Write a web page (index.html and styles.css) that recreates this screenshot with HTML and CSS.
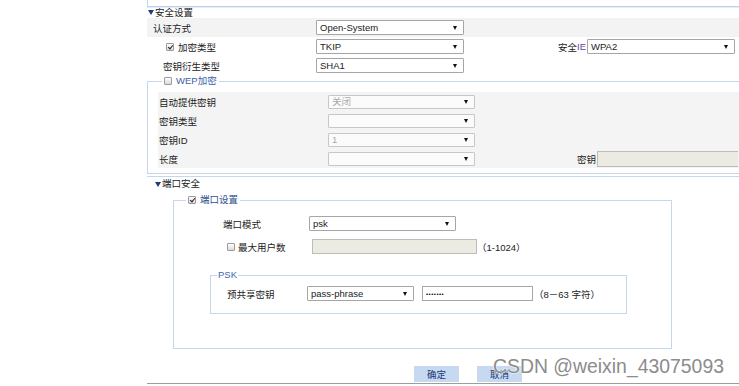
FILE: index.html
```html
<!DOCTYPE html>
<html lang="zh-CN">
<head>
    <meta charset="UTF-8">
    <title>无线安全设置</title>
    <link rel="stylesheet" href="styles.css">
</head>
<body>
    <div class="page">
        <div class="top-box"></div>

        <!-- 安全设置 -->
        <div class="section section-sec">
            <div class="sec-title"><span class="tri"></span>安全设置</div>
            <div class="row row-grey">
                <label class="lbl lbl-main">认证方式</label>
                <span class="sel w148"><select><option>Open-System</option></select></span>
            </div>
            <div class="row">
                <label class="lbl lbl-main lbl-cb"><input type="checkbox" class="cb" checked>加密类型</label>
                <span class="sel w148"><select><option>TKIP</option></select></span>
                <label class="lbl lbl-right">安全<span class="ie">IE</span></label>
                <span class="sel w148"><select><option>WPA2</option></select></span>
            </div>
            <div class="row">
                <label class="lbl lbl-main lbl-sub">密钥衍生类型</label>
                <span class="sel w148"><select><option>SHA1</option></select></span>
            </div>

            <fieldset class="wep">
                <legend><input type="checkbox" class="cb">WEP加密</legend>
                <div class="wep-body">
                    <div class="row">
                        <label class="lbl lbl-wep">自动提供密钥</label>
                        <span class="sel w147 off"><select disabled><option>关闭</option></select></span>
                    </div>
                    <div class="row">
                        <label class="lbl lbl-wep">密钥类型</label>
                        <span class="sel w147 off"><select disabled><option></option></select></span>
                    </div>
                    <div class="row">
                        <label class="lbl lbl-wep">密钥ID</label>
                        <span class="sel w147 off"><select disabled><option>1</option></select></span>
                    </div>
                    <div class="row">
                        <label class="lbl lbl-wep">长度</label>
                        <span class="sel w147 off"><select disabled><option></option></select></span>
                        <label class="lbl lbl-key">密钥</label>
                        <input type="text" class="txt txt-key" disabled>
                    </div>
                </div>
            </fieldset>
        </div>

        <!-- 端口安全 -->
        <div class="section section-port">
            <div class="sec-title sec-title-port"><span class="tri"></span>端口安全</div>
            <fieldset class="port">
                <legend><input type="checkbox" class="cb" checked>端口设置</legend>
                <div class="row port-row">
                    <label class="lbl lbl-mode">端口模式</label>
                    <span class="sel w147"><select><option>psk</option></select></span>
                </div>
                <div class="row port-row port-row-max">
                    <label class="lbl lbl-max"><input type="checkbox" class="cb">最大用户数</label>
                    <input type="text" class="txt txt-max" disabled>
                    <span class="note">（1-1024）</span>
                </div>

                <fieldset class="psk">
                    <legend>PSK</legend>
                    <div class="row psk-row">
                        <label class="lbl lbl-psk">预共享密钥</label>
                        <span class="sel w107"><select><option>pass-phrase</option></select></span>
                        <input type="password" class="txt txt-pass" value="1234567">
                        <span class="note note-psk">（8－63 字符）</span>
                    </div>
                </fieldset>
            </fieldset>
        </div>

        <div class="actions">
            <button type="button" class="btn">确定</button>
            <button type="button" class="btn">取消</button>
        </div>
        <div class="footer-line"></div>
    </div>

    <div class="watermark">CSDN @weixin_43075093</div>
</body>
</html>
```

FILE: styles.css
```css
body {
    margin: 0;
    font-family: "Liberation Sans", Arial, "Noto Sans CJK SC", sans-serif;
    font-size: 9.5px;
    color: #222222;
    background: #ffffff;
    overflow: hidden;
}

.page {
    margin-left: 147px;
    width: 592px;
    overflow: hidden;
}

.top-box {
    height: 6px;
    border-left: 1px solid #c5d7ef;
    border-bottom: 1px solid #bcd0ec;
    box-shadow: 0 1px 0 #e4edf8;
}

.section-sec {
    border-bottom: 1px solid #c5d7ef;
}

.sec-title {
    display: flex;
    align-items: center;
    height: 11px;
    line-height: 11px;
    padding-left: 1px;
}

.sec-title-port {
    height: 14px;
    line-height: 14px;
    padding-left: 8px;
}

.tri {
    width: 0;
    height: 0;
    margin-right: 1px;
    border-left: 3px solid transparent;
    border-right: 3px solid transparent;
    border-top: 5px solid #1d3c78;
}

.row {
    display: flex;
    align-items: center;
    height: 19px;
}

.row-grey {
    background: #f3f3f3;
}

.lbl {
    display: flex;
    align-items: center;
    flex-shrink: 0;
    white-space: nowrap;
}

.lbl-main {
    width: 169px;
    padding-left: 6px;
    box-sizing: border-box;
}

.lbl-cb {
    padding-left: 19px;
}

.lbl-sub {
    padding-left: 16px;
}

.lbl-right {
    width: 123px;
    justify-content: flex-end;
    padding-right: 1px;
    box-sizing: border-box;
}

.ie {
    color: #6b3fa0;
}

/* selects */
.sel {
    position: relative;
    display: inline-block;
    flex-shrink: 0;
}

.sel select {
    -webkit-appearance: none;
    appearance: none;
    display: block;
    width: 100%;
    height: 15px;
    margin: 0;
    padding: 0 12px 0 3px;
    border: 1px solid #a6a6a6;
    border-radius: 1px;
    background: #ffffff;
    color: #222222;
    font: inherit;
    box-sizing: border-box;
}

.sel::after {
    content: "";
    position: absolute;
    right: 7px;
    top: 6px;
    border-left: 2.5px solid transparent;
    border-right: 2.5px solid transparent;
    border-top: 4px solid #111111;
}

.sel.off select {
    color: #8a8a8a;
    border-color: #b4b4b4;
    height: 14px;
}

.w148 { width: 148px; }
.w147 { width: 147px; }
.w107 { width: 107px; }

/* checkboxes */
.cb {
    -webkit-appearance: none;
    appearance: none;
    position: relative;
    width: 8px;
    height: 8px;
    margin: 0 4px 0 0;
    border: 1px solid #9a9a9a;
    border-radius: 1px;
    background: linear-gradient(#ffffff, #dadada);
    box-sizing: border-box;
    flex-shrink: 0;
}

.cb:checked::after {
    content: "";
    position: absolute;
    left: 1.5px;
    top: 0;
    width: 2px;
    height: 4px;
    border-right: 1.5px solid #222222;
    border-bottom: 1.5px solid #222222;
    transform: rotate(40deg);
}

/* fieldsets */
fieldset {
    margin: 0;
    padding: 0;
    min-width: 0;
    border: 1px solid #c5d7ef;
}

legend {
    display: flex;
    align-items: center;
    height: 10px;
    line-height: 10px;
    padding: 0 2px;
    color: #3b62a8;
}

.wep {
    margin: 1px 0 2px 0;
    padding: 6px 0 5px 0;
    border-right: none;
}

.wep legend {
    margin-left: 14px;
}

.wep-body {
    margin-left: 10px;
    background: #f4f4f4;
}

.lbl-wep {
    width: 170px;
    padding-left: 1px;
    box-sizing: border-box;
}

.wep-body .sel select {
    height: 14px;
}

.wep-body .sel::after {
    top: 5px;
}

.lbl-key {
    width: 122px;
    justify-content: flex-end;
    padding-right: 1px;
    box-sizing: border-box;
}

.txt {
    height: 15px;
    margin: 0;
    padding: 0 3px;
    border: 1px solid #a6a6a6;
    background: #ffffff;
    font: inherit;
    box-sizing: border-box;
    flex-shrink: 0;
}

.txt:disabled {
    background: #ebebe4;
    border-color: #bdbdb5;
}

.txt-key {
    width: 141px;
    height: 16px;
    border-right: none;
}

/* 端口设置 */
.port {
    width: 499px;
    margin: 4px 0 0 26px;
    padding: 0 0 34px 0;
    box-sizing: border-box;
}

.port legend {
    margin-left: 12px;
    color: #2b4f8f;
}

.port-row {
    padding-left: 49px;
    margin-top: 9px;
}

.port-row-max {
    margin-top: 4px;
}

.lbl-mode {
    width: 86px;
}

.lbl-max {
    width: 89px;
    padding-left: 4px;
    box-sizing: border-box;
}

.lbl-max .cb {
    margin-right: 3px;
}

.txt-max {
    width: 165px;
}

.note {
    white-space: nowrap;
}

.psk {
    width: 417px;
    margin: 14px 0 0 36px;
    padding: 4px 0 10px 0;
    box-sizing: border-box;
}

.psk legend {
    margin-left: 6px;
    padding: 0 1px;
    color: #4169b0;
}

.psk-row {
    padding-left: 16px;
}

.lbl-psk {
    width: 80px;
}

.txt-pass {
    width: 111px;
    margin-left: 8px;
    font-size: 6px;
    letter-spacing: 0.5px;
}

.note-psk {
    margin-left: 1px;
}

/* 按钮 */
.actions {
    display: flex;
    gap: 18px;
    margin-top: 17px;
    padding-left: 267px;
}

.btn {
    width: 45px;
    height: 16px;
    padding: 0;
    border: none;
    background: #c6d9f0;
    color: #1c3a78;
    font: inherit;
    cursor: pointer;
}

.footer-line {
    margin-top: 1px;
    border-top: 1px solid #9c9c9c;
    box-shadow: 0 1px 0 #d2d2d2;
    height: 2px;
}

.watermark {
    position: absolute;
    left: 493px;
    top: 356px;
    font-family: "Liberation Sans", Arial, sans-serif;
    font-size: 19.4px;
    line-height: 20px;
    color: #8c8c8c;
    text-shadow: 0 0 2px #ffffff, 0 0 2px #ffffff;
    white-space: nowrap;
}
```
